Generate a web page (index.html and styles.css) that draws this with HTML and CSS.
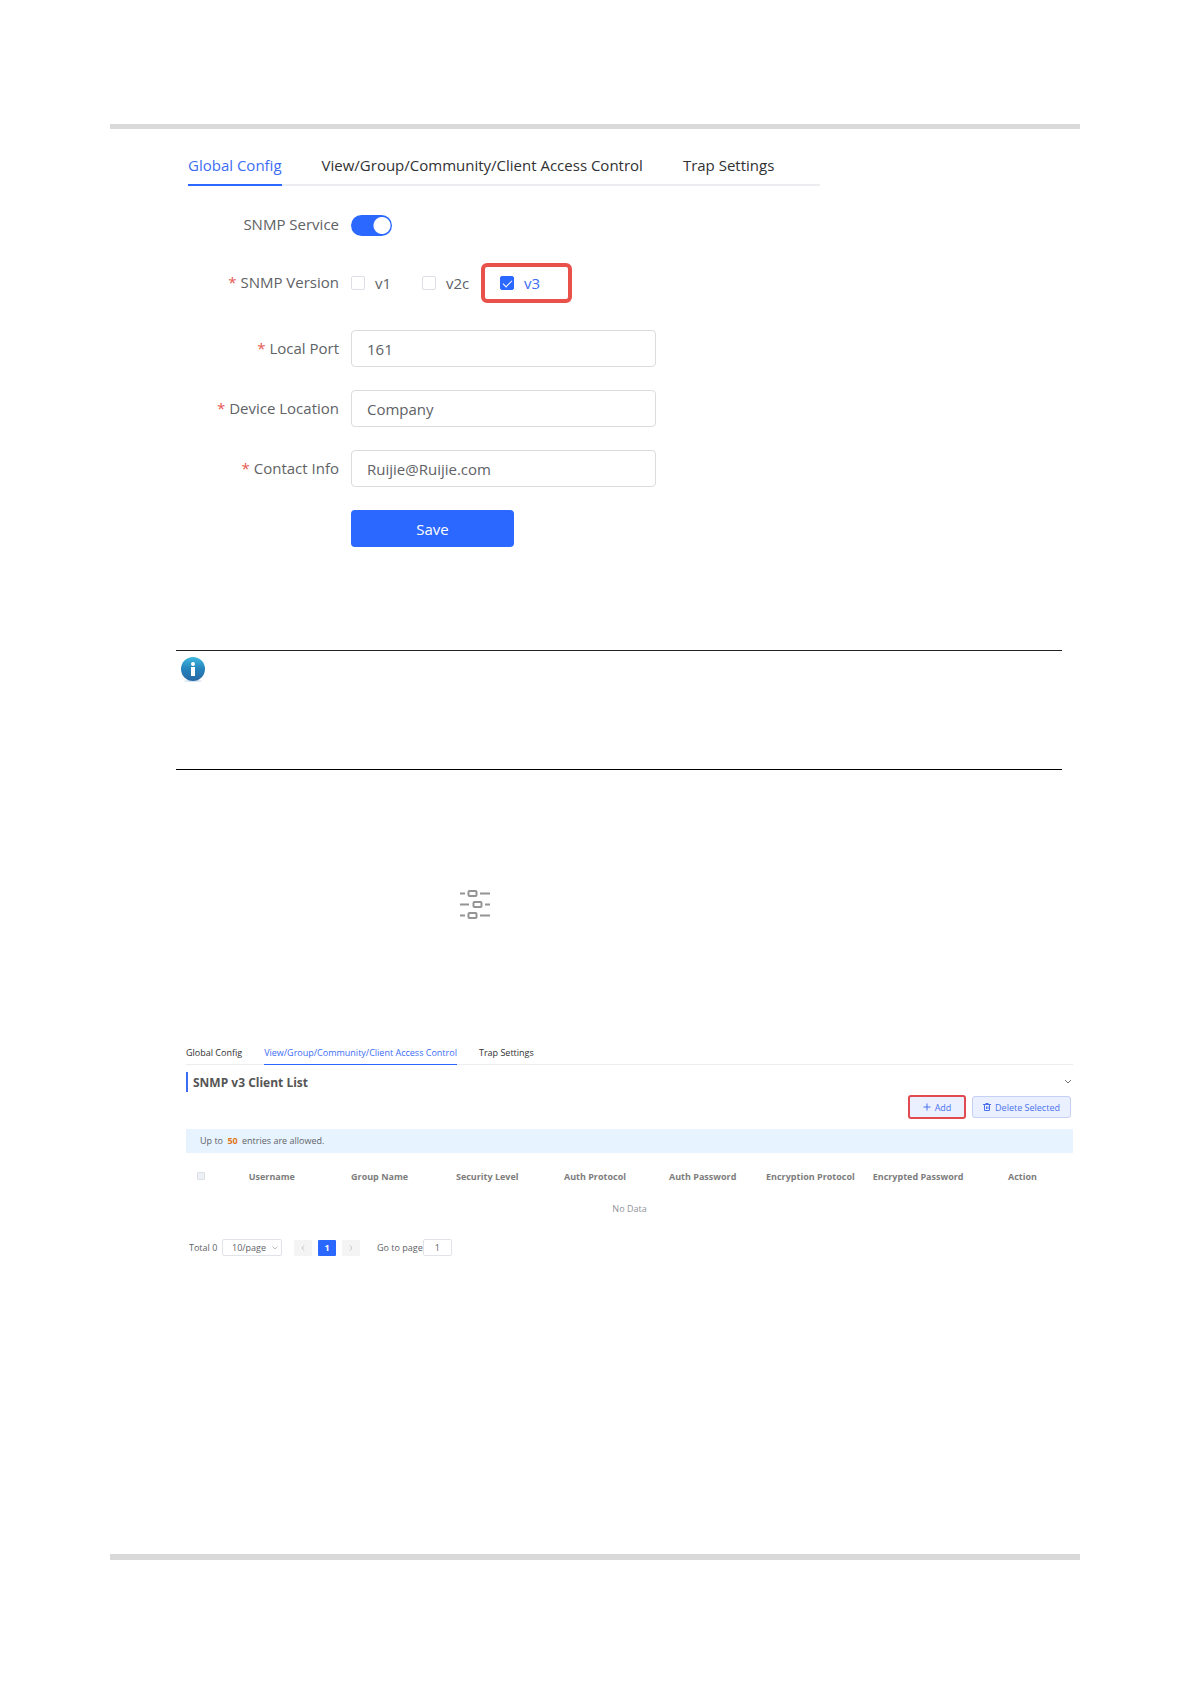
FILE: index.html
```html
<!DOCTYPE html>
<html lang="en">
<head>
    <meta charset="UTF-8">
    <meta name="viewport" content="width=device-width, initial-scale=1.0">
    <title>SNMP</title>
    <link rel="stylesheet" href="styles.css">
</head>
<body>
    <main class="page">

        <!-- Global config -->
        <section class="config">
            <nav class="tabs">
                <a href="#global" class="active">Global Config</a>
                <a href="#access">View/Group/Community/Client Access Control</a>
                <a href="#trap">Trap Settings</a>
            </nav>

            <form class="form">
                <div class="row short">
                    <label class="name" for="service">SNMP Service</label>
                    <input type="checkbox" class="switch" id="service" checked>
                </div>
                <div class="row version" role="group" aria-labelledby="version">
                    <span class="name required" id="version">SNMP Version</span>
                    <label class="check"><input type="checkbox">v1</label>
                    <label class="check"><input type="checkbox">v2c</label>
                    <label class="check marked"><input type="checkbox" checked>v3</label>
                </div>
                <div class="row">
                    <label class="name required" for="port">Local Port</label>
                    <input type="text" class="field" id="port" value="161">
                </div>
                <div class="row">
                    <label class="name required" for="location">Device Location</label>
                    <input type="text" class="field" id="location" value="Company">
                </div>
                <div class="row">
                    <label class="name required" for="contact">Contact Info</label>
                    <input type="text" class="field" id="contact" value="Ruijie@Ruijie.com">
                </div>
                <div class="row">
                    <span class="name"></span>
                    <button type="button" class="save">Save</button>
                </div>
            </form>
        </section>

        <!-- Note -->
        <aside class="note">
            <svg width="24" height="26" viewBox="0 0 24 26" role="img" aria-label="Note">
                <defs>
                    <linearGradient id="blue" x1="0" y1="0" x2="0" y2="1">
                        <stop offset="0" stop-color="#3fb8df"/>
                        <stop offset="0.5" stop-color="#2583bb"/>
                        <stop offset="1" stop-color="#2868a4"/>
                    </linearGradient>
                </defs>
                <ellipse cx="12" cy="24" rx="9" ry="1" fill="#d4e4f0"/>
                <circle cx="12" cy="12" r="12" fill="url(#blue)"/>
                <circle cx="12" cy="7" r="2" fill="#fff"/>
                <path d="M10 10h4v9h-4z" fill="#fff"/>
            </svg>
        </aside>

        <svg class="sliders" width="32" height="30" viewBox="0 0 32 30" fill="none" stroke="#949494" stroke-width="2" role="img" aria-label="Configure">
            <path d="M0 4.500h5M20 4.500h10M0 15.500h9M25 15.500h5M0 26.500h5M20 26.500h10"/>
            <rect x="8.500" y="2" width="8" height="5" rx="1"/>
            <rect x="13.500" y="13" width="8" height="5" rx="1"/>
            <rect x="8.500" y="24" width="8" height="5" rx="1"/>
        </svg>

        <!-- Client list -->
        <section class="clients">
            <nav class="tabs small">
                <a href="#global">Global Config</a>
                <a href="#access" class="active">View/Group/Community/Client Access Control</a>
                <a href="#trap">Trap Settings</a>
            </nav>

            <header class="title">
                <h2>SNMP v3 Client List</h2>
                <svg width="8" height="6" viewBox="0 0 8 6" fill="none" stroke="#777"><path d="M1 1l3 3 3-3"/></svg>
            </header>

            <div class="actions">
                <button type="button" class="add">
                    <svg width="8" height="8" viewBox="0 0 8 8" fill="none" stroke="currentColor"><path d="M4 0.500v7M0.500 4h7"/></svg>
                    Add
                </button>
                <button type="button">
                    <svg width="8" height="8" viewBox="0 0 8 8" fill="none" stroke="currentColor"><path d="M0 1.500h8M2.500 0.500h3M1.500 2v5.500h5V2M3.500 3.500v2.500M5 3.500v2.500"/></svg>
                    Delete Selected
                </button>
            </div>

            <p class="limit">Up to <b>50</b> entries are allowed.</p>

            <table>
                <thead>
                    <tr>
                        <th class="pick"><input type="checkbox" aria-label="Select all" disabled></th>
                        <th>Username</th>
                        <th>Group Name</th>
                        <th>Security Level</th>
                        <th>Auth Protocol</th>
                        <th>Auth Password</th>
                        <th>Encryption Protocol</th>
                        <th>Encrypted Password</th>
                        <th>Action</th>
                    </tr>
                </thead>
                <tbody>
                    <tr><td colspan="9">No Data</td></tr>
                </tbody>
            </table>

            <div class="pager">
                <span class="total">Total 0</span>
                <div class="size">
                    <select aria-label="Entries per page"><option>10/page</option></select>
                    <svg width="6" height="4" viewBox="0 0 6 4" fill="none" stroke="#bbb"><path d="M0.500 0.500L3 3l2.500-2.500"/></svg>
                </div>
                <div class="pages">
                    <button type="button" aria-label="Previous page" disabled><svg width="4" height="6" viewBox="0 0 4 6" fill="none" stroke="#c4c4c4"><path d="M3 0.500L1 3l2 2.500"/></svg></button>
                    <button type="button" class="current">1</button>
                    <button type="button" aria-label="Next page" disabled><svg width="4" height="6" viewBox="0 0 4 6" fill="none" stroke="#c4c4c4"><path d="M1 0.500L3 3 1 5.500"/></svg></button>
                </div>
                <label class="goto"><span>Go to page</span><input type="text" value="1"></label>
            </div>
        </section>

    </main>
</body>
</html>
```
FILE: styles.css
```css
* { box-sizing: border-box; }
body { margin: 0; background: #fff; color: #606266; font-family: "Open Sans", "Noto Sans", sans-serif; font-size: 15px; }
button, input, select { font: inherit; color: inherit; margin: 0; }
svg { display: block; flex: none; }

.page { margin: 124px 111px 124px 110px; padding-bottom: 298px; border-top: 5px solid #d9d9d9; border-bottom: 6px solid #d9d9d9; }

/* Tabs */
.tabs { display: flex; gap: 40px; border-bottom: 2px solid #ebedf0; }
.tabs a { color: #303133; text-decoration: none; line-height: 20px; padding-bottom: 9px; margin-bottom: -2px; border-bottom: 2px solid transparent; white-space: nowrap; }
.tabs .active { color: #3c6df5; border-bottom-color: #2b68ff; }
.tabs.small { gap: 22px; font-size: 9px; border-bottom-width: 1px; }
.tabs.small a { line-height: 14px; padding-bottom: 4px; margin-bottom: -1px; border-bottom-width: 1px; }

/* Global config form */
.config { max-width: 710px; padding: 26px 0 0 78px; }
.form { display: flex; flex-direction: column; gap: 23px; padding-top: 28px; }
.row { display: flex; align-items: center; min-height: 37px; }
.row.short { min-height: 21px; }
.name { width: 151px; margin-right: 12px; padding-bottom: 2px; text-align: right; white-space: nowrap; }
.required::before { content: "* "; color: #e8584f; }
.switch { appearance: none; width: 41px; height: 21px; border-radius: 11px; background: radial-gradient(circle at 31px 50%, #fff 8px, #2b68ff 9px); }
.row.version { min-height: 40px; margin: 4px 0; }
.check { display: flex; align-items: center; gap: 10px; width: 71px; }
.check input, .pick input { appearance: none; width: 14px; height: 14px; border: 1px solid #dcdfe6; border-radius: 2px; }
.check input:checked { border-color: #2b68ff; background: #2b68ff; position: relative; }
.check input:checked::after { content: ""; position: absolute; left: 4px; top: 1px; width: 4px; height: 8px; border: solid #fff; border-width: 0 1px 1px 0; transform: rotate(45deg); }
.check.marked { width: 91px; height: 40px; margin-left: -12px; padding-left: 15px; border: 4px solid #e8524a; border-radius: 6px; color: #3c6df5; }
.field { flex: 0 1 305px; min-width: 0; height: 37px; padding: 0 15px; border: 1px solid #dcdcdc; border-radius: 4px; background: #fff; }
.save { width: 163px; height: 37px; border: 0; border-radius: 4px; background: #2b68ff; color: #fff; }

/* Note */
.note { margin: 103px 18px 0 66px; min-height: 120px; padding: 6px 5px; border-top: 1px solid #222; border-bottom: 1px solid #000; }
.sliders { margin: 119px 0 0 350px; }

/* Client list */
.clients { margin: 127px 7px 0 76px; font-size: 9px; }
.title { display: flex; align-items: center; justify-content: space-between; height: 20px; margin-top: 7px; padding: 0 1px 0 5px; border-left: 2px solid #3c6df5; }
.title h2 { margin: 0; font-size: 12px; color: #555; }
.actions { display: flex; justify-content: flex-end; align-items: center; gap: 6px; height: 24px; margin-top: 3px; padding-right: 2px; }
.actions button { display: flex; align-items: center; justify-content: center; gap: 4px; width: 99px; height: 22px; padding: 0; border: 1px solid #c5d0f5; border-radius: 3px; background: #eaf0ff; color: #4a72ee; }
.actions .add { width: 58px; height: 24px; border: 2px solid #e04a50; }
.limit { margin: 10px 0 0; padding: 0 14px; height: 24px; line-height: 24px; background: #e7f4ff; }
.limit b { margin: 0 2px; color: #e07820; }
table { width: 100%; table-layout: fixed; border-collapse: collapse; text-align: center; }
th { height: 46px; padding: 0; color: #7d7d7d; white-space: nowrap; }
th:last-child { width: 101px; }
td { height: 18px; padding: 0; color: #909399; }
.pick { width: 32px; }
.pick input { display: block; width: 8px; height: 8px; margin-left: 11px; border-radius: 1px; background: #edf0f4; }

.pager { display: flex; align-items: center; height: 17px; margin-top: 22px; padding-left: 3px; }
.total { width: 33px; }
.size { position: relative; width: 60px; }
.size select { display: block; appearance: none; width: 100%; height: 17px; padding: 0 9px; border: 1px solid #e0e3e8; border-radius: 2px; background: #fff; }
.size svg { position: absolute; right: 4px; top: 7px; }
.pages { display: flex; gap: 6px; margin: 0 17px 0 12px; }
.pages button { display: flex; align-items: center; justify-content: center; width: 18px; height: 16px; padding: 0; border: 0; border-radius: 1px; background: #f4f4f5; }
.pages .current { background: #2b68ff; color: #fff; font-weight: bold; }
.goto { display: flex; align-items: center; white-space: nowrap; }
.goto input { width: 29px; height: 17px; padding: 0; border: 1px solid #e0e3e8; border-radius: 2px; text-align: center; }
```
